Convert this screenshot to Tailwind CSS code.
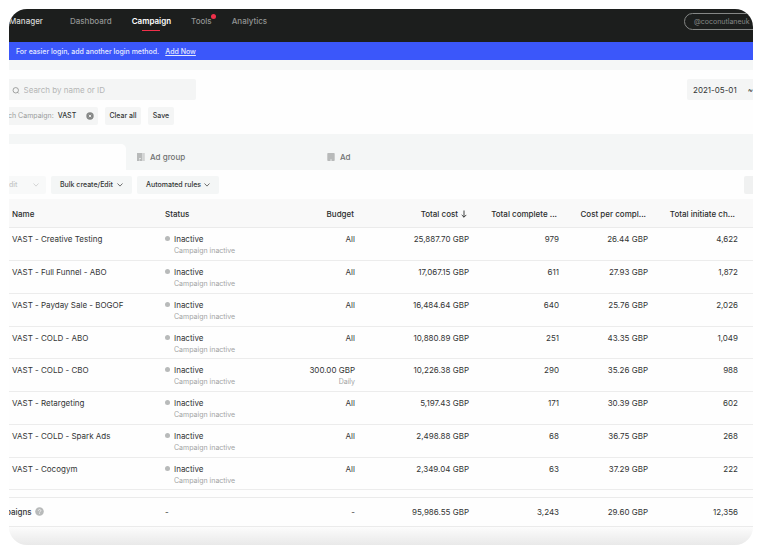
<!DOCTYPE html>
<html lang="en">
<head>
  <meta charset="UTF-8">
  <meta name="viewport" content="width=device-width, initial-scale=1.0">
  <title>Campaigns — Ads Manager</title>
  <script src="https://cdn.jsdelivr.net/npm/@tailwindcss/browser@4"></script>
</head>
<body class="bg-white p-[9px] font-['Inter',sans-serif] text-[8px] leading-3 text-[#333535]">

  <div class="overflow-hidden rounded-[18px] bg-[#fefefe]">

    <!-- Top navigation -->
    <header class="flex h-[33px] items-start justify-between overflow-hidden bg-[#1c1e1d] font-medium text-[#929493]">
      <nav class="flex gap-5 pt-[6px]">
        <a href="#" class="mr-[7px] text-[#d8d9d9]">Manager</a>
        <a href="#">Dashboard</a>
        <a href="#" class="relative font-semibold text-white">Campaign<span class="absolute -bottom-1 left-1/2 h-px w-[18px] -translate-x-1/2 bg-[#f0304a]"></span></a>
        <a href="#" class="relative">Tools<span class="absolute -right-1 -top-px size-[5px] rounded-full bg-[#f0304a]"></span></a>
        <a href="#">Analytics</a>
      </nav>
      <button class="mt-1 -mr-3 h-[17px] w-[81px] rounded-full border border-[#858786] pl-[9px] text-left text-[7px] font-normal text-[#858786]">@coconutlaneuk</button>
    </header>

    <div class="flex h-[18px] items-center gap-[6px] bg-[#3b57fa] pl-[7px] pt-px text-[7px] font-medium text-[#e5e9ff]">
      <span>For easier login, add another login method.</span>
      <a href="#" class="underline">Add Now</a>
    </div>
    <div class="h-[10px] bg-[#f5f7f7]"></div>

    <!-- Search and filters -->
    <div class="mt-[9px] flex items-center justify-between">
      <label class="flex h-[21px] w-[187px] items-center gap-1 rounded-r-[2px] bg-[#f4f5f5] pl-[3px]">
        <svg class="size-2 text-[#858786]" viewBox="0 0 8 8" fill="none" stroke="currentColor" stroke-width=".8"><circle cx="4" cy="4.3" r="2.9"/><path d="M5.8 6.3 7.2 7.7"/></svg>
        <input type="text" aria-label="Search" placeholder="Search by name or ID" class="w-full outline-none placeholder:text-[#b4b6b6]">
      </label>
      <button class="flex h-[21px] w-[66px] items-center justify-between rounded-l-[2px] bg-[#f4f5f5] pl-[6px]"><span>2021-05-01</span><span>~</span></button>
    </div>

    <div class="mt-[7px] flex h-[18px] gap-[7px] text-[7px] font-medium">
      <div class="flex w-[89px] items-center overflow-hidden rounded-r-[2px] bg-[#f4f5f5] pr-1">
        <span class="-ml-px whitespace-nowrap font-normal text-[#9a9c9c]">ch Campaign:</span>
        <span class="ml-1">VAST</span>
        <button aria-label="Remove filter" class="ml-auto">
          <svg class="size-2" viewBox="0 0 8 8"><circle cx="4" cy="4" r="3.7" fill="#858786"/><path d="m2.8 2.8 2.4 2.4m0-2.4L2.8 5.2" stroke="#fff" stroke-width=".8"/></svg>
        </button>
      </div>
      <button class="w-9 rounded-[2px] bg-[#f4f5f5]">Clear all</button>
      <button class="w-[26px] rounded-[2px] bg-[#f4f5f5]">Save</button>
    </div>

    <!-- Level tabs -->
    <div class="mt-[9px] flex h-9 items-end bg-[#f4f6f6] font-medium text-[#6f7171]">
      <button aria-label="Campaign" class="h-[26px] w-[117px] rounded-tr-[5px] bg-[#fefefe]"></button>
      <button class="flex h-[26px] w-[191px] items-center gap-[5px] pl-[11px]">
        <svg class="size-2" viewBox="0 0 8 8"><path d="M0 0h5.5v8H0z" fill="#b8baba"/><path d="M6 0h1.8v8H6z" fill="#d2d4d4"/><path d="M2 5.5h2M2 7h1" stroke="#f4f6f6" stroke-width=".7"/></svg>
        Ad group
      </button>
      <button class="flex h-[26px] items-center gap-[5px] pl-[10px]">
        <svg class="size-2" viewBox="0 0 8 8"><rect x=".3" width="7.4" height="8" rx=".8" fill="#b8baba"/><path d="M3 7.4 4 6l1 1.4z" fill="#f4f6f6"/></svg>
        Ad
      </button>
    </div>

    <!-- Toolbar -->
    <div class="mt-[6px] flex h-[18px] gap-[5px] text-[7px] font-medium">
      <button class="flex w-[37px] items-center justify-between rounded-r-[2px] bg-[#f8f9f9] pr-[7px] text-[#c4c6c6]" disabled>
        dit
        <svg class="h-1 w-[6px]" viewBox="0 0 6 4" fill="none" stroke="currentColor" stroke-width=".7"><path d="M.5.5 3 3.1 5.5.5"/></svg>
      </button>
      <button class="flex w-[81px] items-center justify-between rounded-[2px] bg-[#f4f6f6] px-[9px]">
        Bulk create/Edit
        <svg class="h-1 w-[6px]" viewBox="0 0 6 4" fill="none" stroke="currentColor" stroke-width=".7"><path d="M.5.5 3 3.1 5.5.5"/></svg>
      </button>
      <button class="flex w-[82px] items-center justify-between rounded-[2px] bg-[#f4f6f6] px-[9px]">
        Automated rules
        <svg class="h-1 w-[6px]" viewBox="0 0 6 4" fill="none" stroke="currentColor" stroke-width=".7"><path d="M.5.5 3 3.1 5.5.5"/></svg>
      </button>
      <button aria-label="Columns" class="ml-auto w-[9px] rounded-l-[2px] bg-[#f0f1f1]"></button>
    </div>

    <table class="mt-[5px] w-full table-fixed whitespace-nowrap text-right">
      <colgroup>
        <col>
        <col class="w-[112px]">
        <col class="w-[91px]">
        <col class="w-[114px]">
        <col class="w-[90px]">
        <col class="w-[89px]">
        <col class="w-[95px]">
      </colgroup>
      <thead class="bg-[#f9f9f9] text-[#2b2d2d]">
        <tr class="h-7 border-b border-[#ebebeb] *:pt-[2px] *:font-medium">
          <th class="pl-[3px] text-left">Name</th>
          <th class="pl-[3px] text-left">Status</th>
          <th class="pr-[11px]">Budget</th>
          <th class="pr-3">
            <span class="inline-flex items-center gap-[3px]">Total cost
              <svg class="h-2 w-[6px]" viewBox="0 0 6 8" fill="none" stroke="currentColor" stroke-width=".9"><path d="M3 .5v6.7M.7 4.9 3 7.2l2.3-2.3"/></svg>
            </span>
          </th>
          <th class="pr-3">Total complete ...</th>
          <th class="pr-3">Cost per compl...</th>
          <th class="pr-[18px]">Total initiate ch...</th>
        </tr>
      </thead>
      <tbody id="campaignRows"></tbody>
      <tfoot>
        <tr class="h-[29px] border-y border-[#ebebeb]">
          <td class="text-left font-medium">
            <span class="flex items-center gap-[3px]">
              <span class="-ml-[3px]">paigns</span>
              <svg class="size-[9px]" viewBox="0 0 9 9"><circle cx="4.5" cy="4.5" r="4.3" fill="#b8baba"/><path d="M3.3 3.7c0-1.7 2.5-1.6 2.500-.1 0 .9-1.2.9-1.2 1.9M4.6 6.2v.8" fill="none" stroke="#fff" stroke-width=".7"/></svg>
            </span>
          </td>
          <td class="pl-[3px] text-left">-</td>
          <td class="pr-[10px]">-</td>
          <td class="pr-[10px]">95,986.55 GBP</td>
          <td class="pr-[10px]">3,243</td>
          <td class="pr-[10px]">29.60 GBP</td>
          <td class="pr-[15px]">12,356</td>
        </tr>
      </tfoot>
    </table>
    <div class="h-[18px] bg-linear-to-b from-[#fcfcfc] to-[#e9e9e9]"></div>
  </div>

  <script>
    const campaigns = [
      ["VAST - Creative Testing", "All", "", "25,887.70", "979", "26.44", "4,622"],
      ["VAST - Full Funnel - ABO", "All", "", "17,067.15", "611", "27.93", "1,872"],
      ["VAST - Payday Sale - BOGOF", "All", "", "16,484.64", "640", "25.76", "2,026"],
      ["VAST - COLD - ABO", "All", "", "10,880.89", "251", "43.35", "1,049"],
      ["VAST - COLD - CBO", "300.00 GBP", "Daily", "10,226.38", "290", "35.26", "988"],
      ["VAST - Retargeting", "All", "", "5,197.43", "171", "30.39", "602"],
      ["VAST - COLD - Spark Ads", "All", "", "2,498.88", "68", "36.75", "268"],
      ["VAST - Cocogym", "All", "", "2,349.04", "63", "37.29", "222"]
    ];

    const rows = campaigns.map(([name, budget, period, cost, complete, per, initiate]) => `
      <tr class="h-[33px] border-b border-[#ececec] align-top *:pt-[5px] nth-[4n]:h-8">
        <td class="pl-[3px] text-left">${name}</td>
        <td class="pl-[3px] text-left">
          <div class="flex items-center gap-1"><span class="size-[5px] rounded-full bg-[#b8baba]"></span>Inactive</div>
          <div class="pl-[9px] text-[7px] text-[#a2a4a4]">Campaign inactive</div>
        </td>
        <td class="pr-[10px]">${budget}<div class="text-[7px] text-[#a2a4a4]">${period}</div></td>
        <td class="pr-[10px]">${cost} GBP</td>
        <td class="pr-[10px]">${complete}</td>
        <td class="pr-[10px]">${per} GBP</td>
        <td class="pr-[15px]">${initiate}</td>
      </tr>`);

    rows.push(`<tr class="h-2"><td colspan="7"></td></tr>`);
    document.getElementById("campaignRows").innerHTML = rows.join("");
  </script>

</body>
</html>
